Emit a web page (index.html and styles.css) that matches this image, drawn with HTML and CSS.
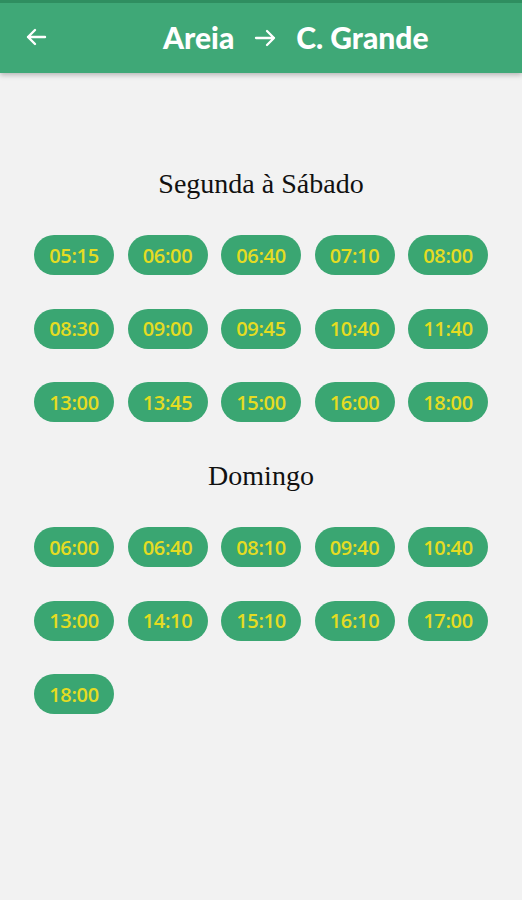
FILE: index.html
```html
<!DOCTYPE html>
<html lang="pt">
<head>
<meta charset="utf-8">
<link rel="stylesheet" href="styles.css">
</head>
<body>
<header class="appbar">
  <svg class="back" width="24" height="24" viewBox="0 0 24 24"><path d="M21 12H4M11 5l-7 7 7 7" fill="none" stroke="#fff" stroke-width="2.4" stroke-linecap="round" stroke-linejoin="round"/></svg>
  <div class="route">
    <span>Areia</span>
    <svg class="arrow" width="22" height="20" viewBox="0 0 22 20"><path d="M2 10h18M13 3l7 7-7 7" fill="none" stroke="#fff" stroke-width="2.3" stroke-linecap="round" stroke-linejoin="round"/></svg>
    <span>C. Grande</span>
  </div>
</header>
<main class="content">
  <h2 class="day">Segunda à Sábado</h2>
  <div class="grid">
    <span class="pill">05:15</span><span class="pill">06:00</span><span class="pill">06:40</span><span class="pill">07:10</span><span class="pill">08:00</span>
    <span class="pill">08:30</span><span class="pill">09:00</span><span class="pill">09:45</span><span class="pill">10:40</span><span class="pill">11:40</span>
    <span class="pill">13:00</span><span class="pill">13:45</span><span class="pill">15:00</span><span class="pill">16:00</span><span class="pill">18:00</span>
  </div>
  <h2 class="day second">Domingo</h2>
  <div class="grid">
    <span class="pill">06:00</span><span class="pill">06:40</span><span class="pill">08:10</span><span class="pill">09:40</span><span class="pill">10:40</span>
    <span class="pill">13:00</span><span class="pill">14:10</span><span class="pill">15:10</span><span class="pill">16:10</span><span class="pill">17:00</span>
    <span class="pill">18:00</span>
  </div>
</main>
</body>
</html>
```
FILE: styles.css
```css
* { box-sizing: border-box; }
html, body { margin: 0; padding: 0; }
body {
  width: 522px;
  height: 900px;
  background: #f2f2f2;
  font-family: "Open Sans", sans-serif;
  overflow: hidden;
}
.appbar {
  height: 73px;
  background: #3fa877;
  border-top: 3px solid #2f8e60;
  box-shadow: 0 2px 5px rgba(0,0,0,0.25);
  display: flex;
  align-items: center;
  padding-left: 24px;
  position: relative;
}
.back { display: block; margin-top: -2px; }
.route {
  display: flex;
  align-items: center;
  gap: 20px;
  margin-left: 115px;
  color: #fff;
  font-family: "Lato", sans-serif;
  font-weight: 900;
  font-size: 30px;
  margin-top: -3px;
}
.arrow { display: block; margin-top: 2px; }
.content {
  padding: 96px 34px 0;
}
.day {
  margin: 0;
  text-align: center;
  font-family: "Liberation Serif", serif;
  font-weight: normal;
  font-size: 28px;
  line-height: 30px;
  color: #111;
}
.day.second { margin-top: 39px; }
.grid {
  display: grid;
  grid-template-columns: repeat(5, 80px);
  column-gap: 13.5px;
  row-gap: 33.5px;
  margin-top: 36px;
}
.pill {
  height: 40px;
  border-radius: 20px;
  background: #3aa672;
  color: #e5dc22;
  font-family: "Open Sans", sans-serif;
  font-weight: 600;
  font-size: 20px;
  letter-spacing: -0.3px;
  display: flex;
  align-items: center;
  justify-content: center;
}
```
